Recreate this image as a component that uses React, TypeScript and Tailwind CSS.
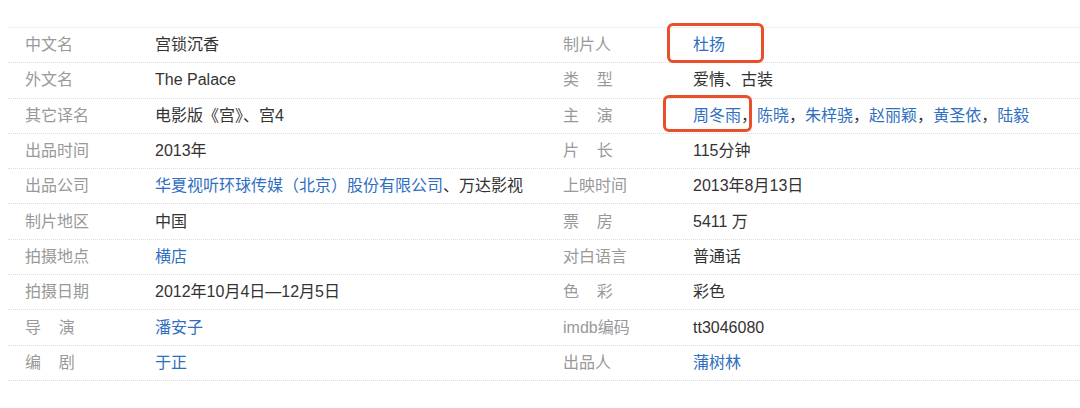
import React from 'react';

type Part = { t: string; link?: boolean };
type Cell = { label: string; value: Part[]; box?: 'a' | 'b' };

const sp = '\u00a0\u00a0\u00a0\u00a0';

const rows: [Cell, Cell][] = [
  [
    { label: '中文名', value: [{ t: '宫锁沉香' }] },
    { label: '制片人', value: [{ t: '杜扬', link: true }], box: 'a' },
  ],
  [
    { label: '外文名', value: [{ t: 'The Palace' }] },
    { label: `类${sp}型`, value: [{ t: '爱情、古装' }] },
  ],
  [
    { label: '其它译名', value: [{ t: '电影版《宫》、宫4' }] },
    {
      label: `主${sp}演`,
      box: 'b',
      value: [
        { t: '周冬雨', link: true }, { t: '，' },
        { t: '陈晓', link: true }, { t: '，' },
        { t: '朱梓骁', link: true }, { t: '，' },
        { t: '赵丽颖', link: true }, { t: '，' },
        { t: '黄圣依', link: true }, { t: '，' },
        { t: '陆毅', link: true },
      ],
    },
  ],
  [
    { label: '出品时间', value: [{ t: '2013年' }] },
    { label: `片${sp}长`, value: [{ t: '115分钟' }] },
  ],
  [
    { label: '出品公司', value: [{ t: '华夏视听环球传媒（北京）股份有限公司', link: true }, { t: '、万达影视' }] },
    { label: '上映时间', value: [{ t: '2013年8月13日' }] },
  ],
  [
    { label: '制片地区', value: [{ t: '中国' }] },
    { label: `票${sp}房`, value: [{ t: '5411 万' }] },
  ],
  [
    { label: '拍摄地点', value: [{ t: '横店', link: true }] },
    { label: '对白语言', value: [{ t: '普通话' }] },
  ],
  [
    { label: '拍摄日期', value: [{ t: '2012年10月4日—12月5日' }] },
    { label: `色${sp}彩`, value: [{ t: '彩色' }] },
  ],
  [
    { label: `导${sp}演`, value: [{ t: '潘安子', link: true }] },
    { label: 'imdb编码', value: [{ t: 'tt3046080' }] },
  ],
  [
    { label: `编${sp}剧`, value: [{ t: '于正', link: true }] },
    { label: '出品人', value: [{ t: '蒲树林', link: true }] },
  ],
];

function InfoCell({ cell }: { cell: Cell }) {
  return (
    <div className="flex items-center pl-[17px]">
      <div className="w-[130px] shrink-0 text-[#999] whitespace-pre">{cell.label}</div>
      <div className="relative whitespace-nowrap">
        {cell.box === 'a' && (
          <div className="absolute left-[-26px] top-[-10px] w-[97px] h-[40px] border-[3px] border-[#ea4f2c] rounded-[6px]" />
        )}
        {cell.box === 'b' && (
          <div className="absolute left-[-30px] top-[-9px] w-[89px] h-[37px] border-[3px] border-[#ea4f2c] rounded-[6px]" />
        )}
        {cell.value.map((p, i) => (
          <span key={i} className={p.link ? 'text-[#2f6fbf]' : 'text-[#333]'}>{p.t}</span>
        ))}
      </div>
    </div>
  );
}

export default function App() {
  return (
    <div
      className="w-[1080px] h-[408px] bg-white overflow-hidden pt-[27px] text-[16px]"
      style={{ fontFamily: '"Liberation Sans", "Noto Sans CJK SC", sans-serif' }}
    >
      <div className="ml-[8px] border-t border-[#f0f0f0]">
        {rows.map((r, i) => (
          <div key={i} className="grid grid-cols-[538px_1fr] h-[35.3px] border-b border-dotted border-[#dcdcdc]">
            <InfoCell cell={r[0]} />
            <InfoCell cell={r[1]} />
          </div>
        ))}
      </div>
    </div>
  );
}
